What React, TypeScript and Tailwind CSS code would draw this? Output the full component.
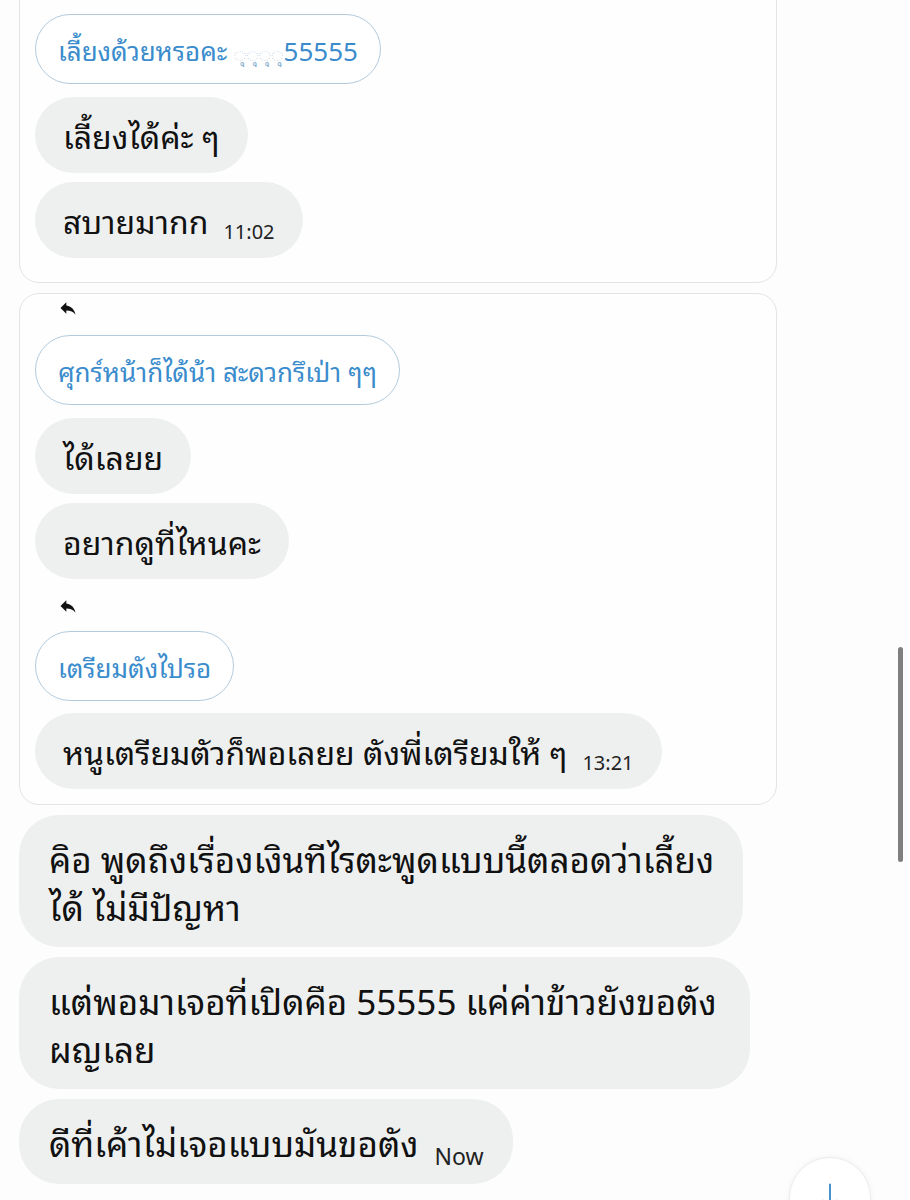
import React from "react";

const ReplyIcon = () => (
  <svg viewBox="0 0 24 24" className="w-[20px] h-[20px]" fill="#111">
    <path d="M10 9V5l-7 7 7 7v-4.1c5 0 8.5 1.6 11 5.1-1-5-4-10-11-11z" />
  </svg>
);

const Quote = ({ children }: { children: React.ReactNode }) => (
  <div className="rounded-full border-[1.5px] border-[#b3cbdd] bg-white px-[22px] py-[15px] text-[26px] leading-[38px] text-[#3a8ccc] whitespace-nowrap">
    {children}
  </div>
);

const Bubble = ({ children, time }: { children: React.ReactNode; time?: string }) => (
  <div className="rounded-full bg-[#eef0f0] px-[28px] py-[15px] text-[32px] leading-[46px] text-[#111] whitespace-nowrap">
    {children}
    {time && <span className="ml-[15px] text-[20px] leading-none align-[-5px] text-[#222]">{time}</span>}
  </div>
);

const Big = ({ children, time, className = "" }: { children: React.ReactNode; time?: string; className?: string }) => (
  <div className={"rounded-[40px] bg-[#eef0f0] pl-[30px] py-[18px] text-[35px] leading-[48px] text-[#111] " + className}>
    {children}
    {time && <span className="ml-[16px] text-[23px] leading-none align-[-8px] text-[#222]">{time}</span>}
  </div>
);

export default function App() {
  return (
    <div className="relative w-[910px] h-[1200px] overflow-hidden bg-[#fdfdfd] font-['Noto_Sans_Thai_Looped','Noto_Sans_Thai','Noto_Sans','DejaVu_Sans',sans-serif]">
      <div className="flex flex-col items-start pl-[19px]">
        {/* card 1 */}
        <div className="-mt-[40px] w-[758px] rounded-[20px] border border-[#e4e4e4] bg-[#fefefe] pl-[15px] pt-[53px] pb-[24px] flex flex-col items-start">
          <Quote>
            เลี้ยงด้วยหรอคะ <span className="text-[19px] leading-none text-[#93b8d6]">◌ุ◌ุ◌ุ◌ุ</span>55555
          </Quote>
          <div className="mt-[13px]">
            <Bubble>เลี้ยงได้ค่ะ ๆ</Bubble>
          </div>
          <div className="mt-[9px]">
            <Bubble time="11:02">สบายมากก</Bubble>
          </div>
        </div>

        {/* card 2 */}
        <div className="mt-[10px] w-[758px] rounded-[20px] border border-[#e4e4e4] bg-[#fefefe] pl-[15px] pt-[4px] pb-[15px] flex flex-col items-start">
          <div className="ml-[23px]">
            <ReplyIcon />
          </div>
          <div className="mt-[17px]">
            <Quote>ศุกร์หน้าก็ได้น้า สะดวกรึเป่า ๆๆ</Quote>
          </div>
          <div className="mt-[13px]">
            <Bubble>ได้เลยย</Bubble>
          </div>
          <div className="mt-[9px]">
            <Bubble>อยากดูที่ไหนคะ</Bubble>
          </div>
          <div className="ml-[23px] mt-[17px]">
            <ReplyIcon />
          </div>
          <div className="mt-[15px]">
            <Quote>เตรียมตังไปรอ</Quote>
          </div>
          <div className="mt-[12px]">
            <Bubble time="13:21">หนูเตรียมตัวก็พอเลยย ตังพี่เตรียมให้ ๆ</Bubble>
          </div>
        </div>

        <div className="mt-[10px] w-[724px]">
          <Big className="pr-[20px]">คิอ พูดถึงเรื่องเงินทีไรตะพูดแบบนี้ตลอดว่าเลี้ยง<br />ได้ ไม่มีปัญหา</Big>
        </div>
        <div className="mt-[10px] w-[731px]">
          <Big className="pr-[20px]">แต่พอมาเจอที่เปิดคือ 55555 แค่ค่าข้าวยังขอตัง<br />ผญเลย</Big>
        </div>
        <div className="mt-[10px]">
          <Big time="Now" className="whitespace-nowrap pr-[30px]">ดีที่เค้าไม่เจอแบบมันขอตัง</Big>
        </div>
      </div>

      {/* scrollbar */}
      <div className="absolute left-[898px] top-[647px] h-[215px] w-[5px] rounded-full bg-[#7f7f7f]" />

      {/* scroll down button */}
      <div className="absolute left-[789px] top-[1157px] flex h-[82px] w-[82px] justify-center rounded-full border border-[#ececec] bg-white shadow-[0_0_6px_rgba(0,0,0,0.05)]">
        <svg viewBox="0 0 24 24" className="mt-[24px] h-[28px] w-[28px]" fill="none" stroke="#3a8ccc" strokeWidth="1.6" strokeLinecap="round">
          <path d="M12 2v20M6 16l6 6 6-6" />
        </svg>
      </div>
    </div>
  );
}
